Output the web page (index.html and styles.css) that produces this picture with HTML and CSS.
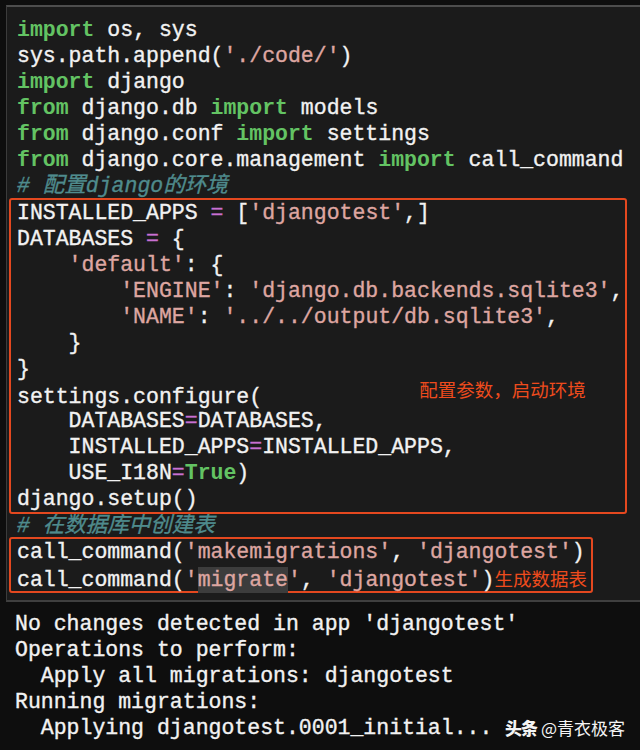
FILE: index.html
```html
<!DOCTYPE html>
<html lang="zh-CN">
<head>
  <meta charset="UTF-8" />
  <title>django setup</title>
  <link rel="stylesheet" href="styles.css">
</head>
<body>
  <div class="cell">
    <div class="ln"><span class="kw">import</span> os, sys</div>
    <div class="ln">sys.path.append(<span class="str">'./code/'</span>)</div>
    <div class="ln"><span class="kw">import</span> django</div>
    <div class="ln"><span class="kw">from</span> django.db <span class="kw">import</span> models</div>
    <div class="ln"><span class="kw">from</span> django.conf <span class="kw">import</span> settings</div>
    <div class="ln"><span class="kw">from</span> django.core.management <span class="kw">import</span> call_command</div>
    <div class="ln"><span class="cm"># 配置django的环境</span></div>

    <div class="box box-wide">
      <div class="ln">INSTALLED_APPS <span class="op">=</span> [<span class="str">'djangotest'</span>,]</div>
      <div class="ln">DATABASES <span class="op">=</span> {</div>
      <div class="ln">    <span class="str">'default'</span>: {</div>
      <div class="ln">        <span class="str">'ENGINE'</span>: <span class="str">'django.db.backends.sqlite3'</span>,</div>
      <div class="ln">        <span class="str">'NAME'</span>: <span class="str">'../../output/db.sqlite3'</span>,</div>
      <div class="ln">    }</div>
      <div class="ln">}</div>
      <div class="ln">settings.configure(<span class="note note-raised">配置参数，启动环境</span></div>
      <div class="ln">    DATABASES<span class="op">=</span>DATABASES,</div>
      <div class="ln">    INSTALLED_APPS<span class="op">=</span>INSTALLED_APPS,</div>
      <div class="ln">    USE_I18N<span class="op">=</span><span class="kw">True</span>)</div>
      <div class="ln">django.setup()</div>
    </div>

    <div class="ln"><span class="cm"># 在数据库中创建表</span></div>

    <div class="box box-narrow">
      <div class="ln">call_command(<span class="str">'makemigrations'</span>, <span class="str">'djangotest'</span>)</div>
      <div class="ln">call_command(<span class="str">'<span class="hl">migrate</span>'</span>, <span class="str">'djangotest'</span>)<span class="note">生成数据表</span></div>
    </div>
  </div>

  <div class="output">
    <div class="ln">No changes detected in app 'djangotest'</div>
    <div class="ln">Operations to perform:</div>
    <div class="ln">  Apply all migrations: djangotest</div>
    <div class="ln">Running migrations:</div>
    <div class="ln">  Applying djangotest.0001_initial...</div>
    <div class="mark"><b>头条</b> @青衣极客</div>
  </div>
</body>
</html>
```

FILE: styles.css
```css
* {
  box-sizing: border-box;
}

body {
  margin: 0;
  background: #0e0e0e;
  color: #f2f2f2;
  font-family: 'Liberation Mono', 'Noto Sans CJK SC', monospace;
  font-size: 21.5px;
  height: 750px;
  overflow: hidden;
}

.cell {
  margin: 5px 0 0 6px;
  background: #1b1b1b;
  border-top: 2px solid #4d4d4d;
  border-left: 1px solid #3c3c3c;
  border-bottom: 2px solid #3f3f3f;
  padding: 10px 0 8px 0;
}

.ln {
  height: 26px;
  line-height: 26px;
  padding-left: 10px;
  white-space: pre;
  -webkit-text-stroke: 0.35px currentColor;
}

.kw {
  color: #63c363;
  font-weight: bold;
  -webkit-text-stroke: 0;
}

.str {
  color: #dea6a1;
}

.op {
  color: #c970d2;
}

.cm {
  color: #4f8b8d;
  font-style: italic;
}

.hl {
  background: #3c3c3c;
  display: inline-block;
  height: 26px;
}

.box {
  position: relative;
  border: 2px solid #e4481f;
  border-radius: 3px;
  margin: -1px 0 -1px 2px;
}

.box .ln {
  padding-left: 6px;
}

.box-wide {
  margin-right: 13px;
}

.box-narrow {
  width: 584px;
  margin-top: -2px;
}

.note {
  font-family: 'Noto Sans CJK SC', sans-serif;
  font-size: 18.5px;
  color: #ee4b1d;
  -webkit-text-stroke: 0;
}

.note-raised {
  position: relative;
  top: -6px;
  margin-left: 157px;
}

.output {
  position: relative;
  margin-top: 9px;
  padding-left: 5px;
}

.output .ln {
  padding-left: 10px;
}

.mark {
  position: absolute;
  right: 15px;
  bottom: 0;
  height: 26px;
  line-height: 26px;
  font-family: 'Noto Sans CJK SC', sans-serif;
  font-size: 17px;
  color: #f4f4f4;
}

.mark b {
  font-weight: 900;
  letter-spacing: -1px;
}
```
